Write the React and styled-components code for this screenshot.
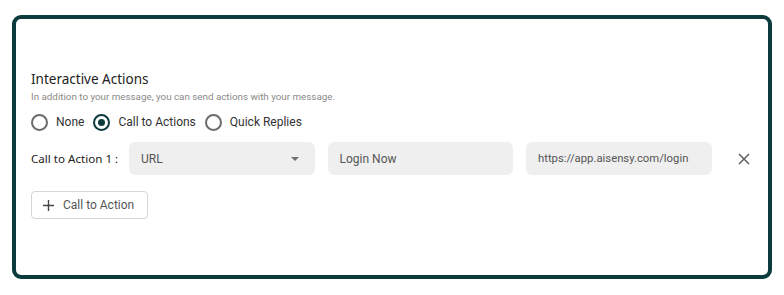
import styled, { createGlobalStyle } from "styled-components";

const GlobalStyle = createGlobalStyle`
  body {
    margin: 0;
    background: #ffffff;
    font-family: Roboto, "Liberation Sans", sans-serif;
  }
`;

const Page = styled.div`
  padding: 15px 0 0 12px;
`;

const Frame = styled.div`
  box-sizing: border-box;
  width: 760px;
  height: 264px;
  border: 4px solid #0b3b3c;
  border-radius: 9px;
  padding: 51px 15px 0 15px;
  display: flex;
  flex-direction: column;
`;

const Title = styled.h3`
  margin: 0;
  font-family: "Noto Sans", "Open Sans", sans-serif;
  font-weight: 400;
  font-size: 13.5px;
  line-height: 18px;
  color: #222;
`;

const Subtitle = styled.p`
  margin: 2px 0 0;
  font-size: 9.8px;
  line-height: 14px;
  color: #8a8a8a;
`;

const RadioGroup = styled.div`
  display: flex;
  align-items: center;
  gap: 9px;
  margin-top: 8px;
  height: 20px;
`;

const RadioLabel = styled.label`
  display: flex;
  align-items: center;
  gap: 8px;
  font-size: 12px;
  color: #333;
`;

const RadioCircle = styled.span`
  box-sizing: border-box;
  width: 17px;
  height: 17px;
  border-radius: 50%;
  border: 2px solid ${(p) => (p.checked ? "#0b3b3c" : "#6b6b6b")};
  display: flex;
  align-items: center;
  justify-content: center;
  &::after {
    content: "";
    width: 7px;
    height: 7px;
    border-radius: 50%;
    background: ${(p) => (p.checked ? "#0b3b3c" : "transparent")};
  }
`;

const ActionRow = styled.div`
  display: flex;
  align-items: center;
  margin-top: 10px;
`;

const RowLabel = styled.span`
  width: 98px;
  font-family: "Noto Sans", "Open Sans", sans-serif;
  font-size: 11.6px;
  color: #222;
`;

const Field = styled.div`
  box-sizing: border-box;
  width: 185.5px;
  height: 33px;
  margin-left: ${(p) => (p.first ? "0" : "13px")};
  border-radius: 6px;
  background: #efefef;
  display: flex;
  align-items: center;
  justify-content: space-between;
  padding: 0 12px;
  font-size: ${(p) => (p.small ? "11.3px" : "12px")};
  color: #555;
`;

const Caret = styled.span`
  width: 0;
  height: 0;
  border-left: 4.5px solid transparent;
  border-right: 4.5px solid transparent;
  border-top: 4.5px solid #707070;
  margin-right: 4px;
`;

const CloseButton = styled.button`
  margin-left: 26px;
  border: none;
  background: none;
  padding: 0;
  display: flex;
`;

const AddButton = styled.button`
  align-self: flex-start;
  margin-top: 16px;
  box-sizing: border-box;
  height: 28px;
  padding: 0 13px 0 11px;
  border: 1px solid #d6d6d6;
  border-radius: 4px;
  background: #fff;
  display: flex;
  align-items: center;
  gap: 9px;
  font-family: Roboto, sans-serif;
  font-size: 12px;
  color: #555;
`;

const options = [
  { label: "None", checked: false },
  { label: "Call to Actions", checked: true },
  { label: "Quick Replies", checked: false },
];

export default function App() {
  return (
    <>
      <GlobalStyle />
      <Page>
        <Frame>
          <Title>Interactive Actions</Title>
          <Subtitle>
            In addition to your message, you can send actions with your message.
          </Subtitle>
          <RadioGroup>
            {options.map((o) => (
              <RadioLabel key={o.label}>
                <RadioCircle checked={o.checked} />
                {o.label}
              </RadioLabel>
            ))}
          </RadioGroup>
          <ActionRow>
            <RowLabel>Call to Action 1 :</RowLabel>
            <Field first>
              URL
              <Caret />
            </Field>
            <Field>Login Now</Field>
            <Field small>https://app.aisensy.com/login</Field>
            <CloseButton>
              <svg width="12" height="12" viewBox="0 0 12 12">
                <path
                  d="M1 1 L11 11 M11 1 L1 11"
                  stroke="#5f5f5f"
                  strokeWidth="1.5"
                  fill="none"
                />
              </svg>
            </CloseButton>
          </ActionRow>
          <AddButton>
            <svg width="11" height="11" viewBox="0 0 11 11">
              <path d="M5.5 0 V11 M0 5.5 H11" stroke="#444" strokeWidth="1.4" />
            </svg>
            Call to Action
          </AddButton>
        </Frame>
      </Page>
    </>
  );
}
